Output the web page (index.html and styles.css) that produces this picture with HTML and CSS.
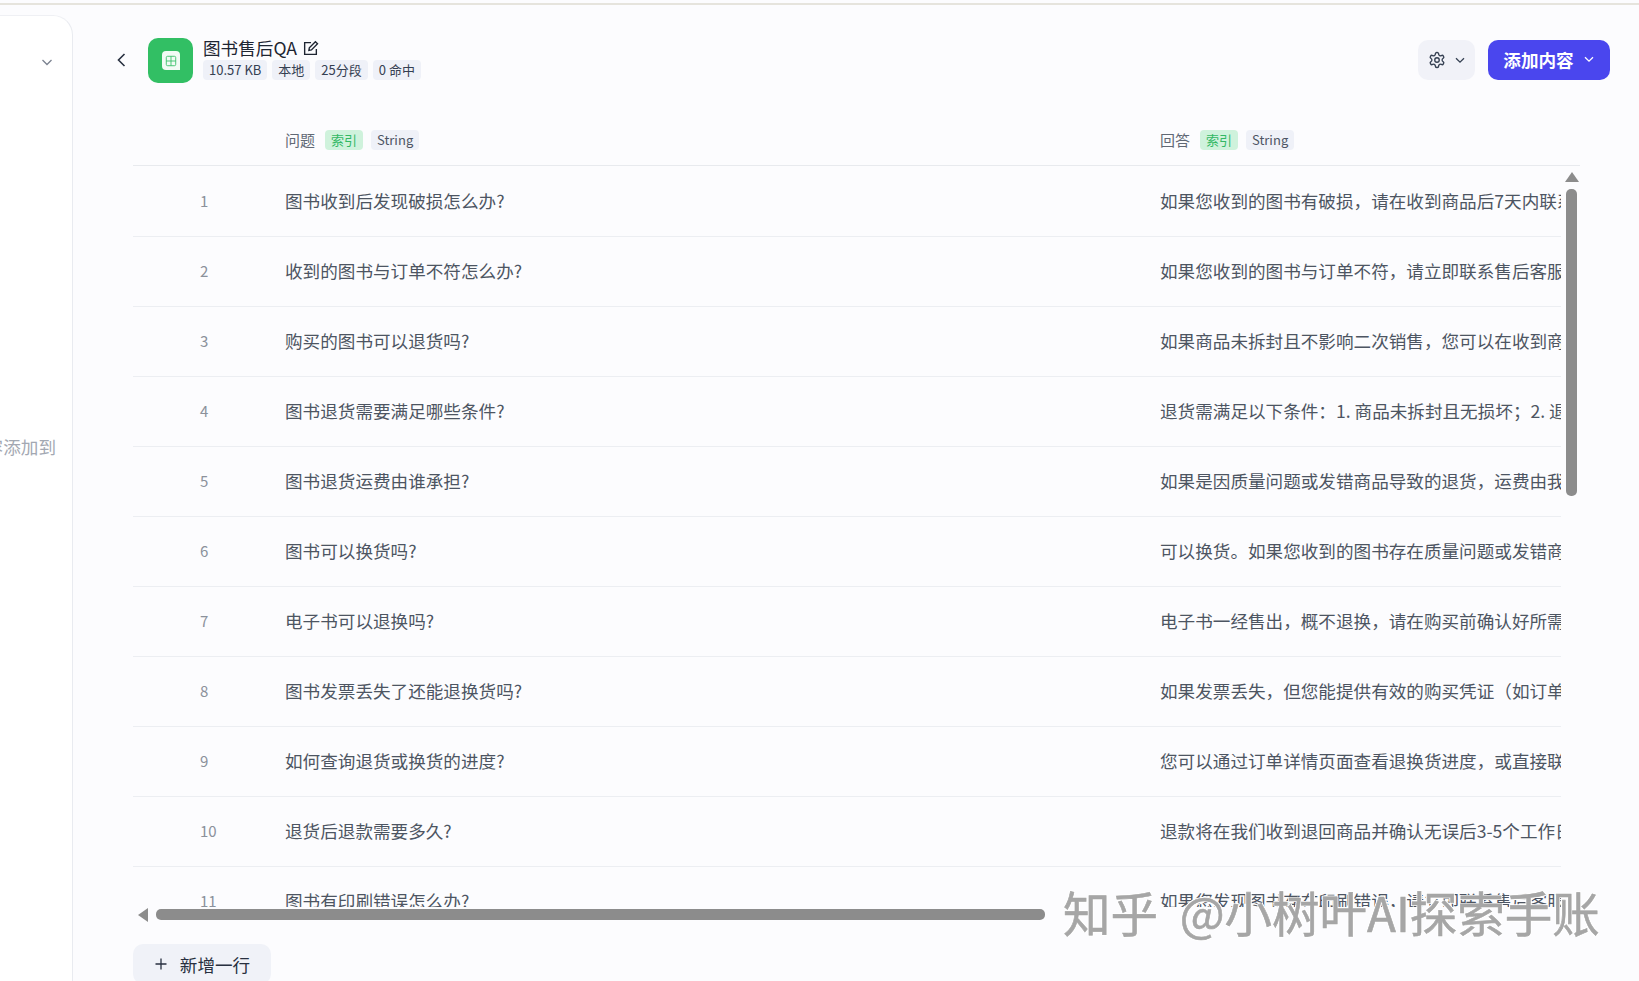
FILE: index.html
```html
<!DOCTYPE html>
<html lang="zh-CN">
<head>
  <meta charset="UTF-8" />
  <title>图书售后QA</title>
  <link rel="stylesheet" href="styles.css">
</head>
<body>

  <div class="app">
    <aside class="sidebar">
      <button class="side-toggle">
        <svg width="14" height="14" viewBox="0 0 14 14"><path d="M2.500 5l4.500 4.500L11.500 5" /></svg>
      </button>
      <p class="side-hint">将内容添加到</p>
    </aside>

    <main class="main">
      <header class="topbar">
        <div class="doc-info">
          <button class="back-btn">
            <svg width="20" height="20" viewBox="0 0 20 20"><path d="M12.500 4l-6 6 6 6" /></svg>
          </button>
          <div class="doc-icon">
            <div class="doc-sheet">
              <svg width="14" height="14" viewBox="0 0 14 14"><rect x="1.500" y="1.500" width="11" height="11" rx="1.500" /><path d="M1.500 7h11M7 1.500v11" /></svg>
            </div>
          </div>
          <div class="doc-text">
            <div class="doc-title">
              <span>图书售后QA</span>
              <svg width="17" height="17" viewBox="0 0 16 16"><path d="M13.500 8.500v5h-11v-11h6M6.500 9.700l.4-2.400L12.600 1.600l2 2-5.700 5.700z" /></svg>
            </div>
            <div class="doc-tags">
              <span class="tag">10.57 KB</span>
              <span class="tag">本地</span>
              <span class="tag">25分段</span>
              <span class="tag">0 命中</span>
            </div>
          </div>
        </div>

        <div class="actions">
          <button class="settings-btn">
            <svg class="gear" width="18" height="18" viewBox="0 0 24 24"><path d="M12.220 2h-.44a2 2 0 0 0-2 2v.18a2 2 0 0 1-1 1.730l-.43.25a2 2 0 0 1-2 0l-.15-.08a2 2 0 0 0-2.730.73l-.22.38a2 2 0 0 0 .73 2.730l.15.1a2 2 0 0 1 1 1.720v.51a2 2 0 0 1-1 1.740l-.15.09a2 2 0 0 0-.73 2.730l.22.38a2 2 0 0 0 2.730.73l.15-.08a2 2 0 0 1 2 0l.43.25a2 2 0 0 1 1 1.730V20a2 2 0 0 0 2 2h.44a2 2 0 0 0 2-2v-.18a2 2 0 0 1 1-1.730l.43-.25a2 2 0 0 1 2 0l.15.08a2 2 0 0 0 2.730-.73l.22-.39a2 2 0 0 0-.73-2.730l-.15-.08a2 2 0 0 1-1-1.740v-.5a2 2 0 0 1 1-1.740l.15-.09a2 2 0 0 0 .73-2.730l-.22-.38a2 2 0 0 0-2.730-.73l-.15.08a2 2 0 0 1-2 0l-.43-.25a2 2 0 0 1-1-1.730V4a2 2 0 0 0-2-2z" /><circle cx="12" cy="12" r="3" /></svg>
            <svg width="12" height="12" viewBox="0 0 12 12"><path d="M2 4.200l4 4 4-4" /></svg>
          </button>
          <button class="add-btn">
            <span>添加内容</span>
            <svg width="12" height="12" viewBox="0 0 12 12"><path d="M2 4.200l4 4 4-4" /></svg>
          </button>
        </div>
      </header>

      <section class="table-wrap">
        <div class="table-head">
          <div></div>
          <div class="head-cell"><span class="head-label">问题</span><span class="badge green">索引</span><span class="badge">String</span></div>
          <div class="head-cell"><span class="head-label">回答</span><span class="badge green">索引</span><span class="badge">String</span></div>
        </div>

        <div class="table-body">
          <div class="row"><div class="num">1</div><div class="cell">图书收到后发现破损怎么办?</div><div class="cell">如果您收到的图书有破损，请在收到商品后7天内联系售后客服</div></div>
          <div class="row"><div class="num">2</div><div class="cell">收到的图书与订单不符怎么办?</div><div class="cell">如果您收到的图书与订单不符，请立即联系售后客服处理</div></div>
          <div class="row"><div class="num">3</div><div class="cell">购买的图书可以退货吗?</div><div class="cell">如果商品未拆封且不影响二次销售，您可以在收到商品后退货</div></div>
          <div class="row"><div class="num">4</div><div class="cell">图书退货需要满足哪些条件?</div><div class="cell">退货需满足以下条件：1. 商品未拆封且无损坏；2. 退货申请在有效期内</div></div>
          <div class="row"><div class="num">5</div><div class="cell">图书退货运费由谁承担?</div><div class="cell">如果是因质量问题或发错商品导致的退货，运费由我们承担</div></div>
          <div class="row"><div class="num">6</div><div class="cell">图书可以换货吗?</div><div class="cell">可以换货。如果您收到的图书存在质量问题或发错商品，可申请换货</div></div>
          <div class="row"><div class="num">7</div><div class="cell">电子书可以退换吗?</div><div class="cell">电子书一经售出，概不退换，请在购买前确认好所需内容</div></div>
          <div class="row"><div class="num">8</div><div class="cell">图书发票丢失了还能退换货吗?</div><div class="cell">如果发票丢失，但您能提供有效的购买凭证（如订单截图）</div></div>
          <div class="row"><div class="num">9</div><div class="cell">如何查询退货或换货的进度?</div><div class="cell">您可以通过订单详情页面查看退换货进度，或直接联系客服</div></div>
          <div class="row"><div class="num">10</div><div class="cell">退货后退款需要多久?</div><div class="cell">退款将在我们收到退回商品并确认无误后3-5个工作日内到账</div></div>
          <div class="row"><div class="num">11</div><div class="cell">图书有印刷错误怎么办?</div><div class="cell">如果您发现图书存在印刷错误，请立即联系售后客服处理</div></div>
        </div>

        <div class="hscroll">
          <span class="arrow-left"></span>
          <span class="hthumb"></span>
        </div>

        <div class="vscroll">
          <span class="arrow-up"></span>
          <span class="vthumb"></span>
        </div>
      </section>

      <button class="add-row">
        <svg width="14" height="14" viewBox="0 0 14 14"><path d="M7 1.500v11M1.500 7h11" /></svg>
        <span>新增一行</span>
      </button>
    </main>
  </div>

  <div class="watermark">知乎 @小树叶AI探索手账</div>

</body>
</html>
```

FILE: styles.css
```css
* {
  margin: 0;
  padding: 0;
  box-sizing: border-box;
  font-family: "Noto Sans CJK SC", "Noto Sans", sans-serif;
}

html, body {
  height: 100%;
  overflow: hidden;
}

body {
  background-color: #fcfcfe;
  padding-top: 3px;
  color: #354052;
}

button {
  border: none;
  background: none;
  cursor: pointer;
}

svg {
  fill: none;
  stroke: currentColor;
  stroke-width: 1.3;
  display: block;
}

.app {
  display: flex;
  height: 100%;
  border-top: 2px solid #e6e4dd;
}

/* left panel, mostly cut off */
.sidebar {
  width: 73px;
  flex-shrink: 0;
  margin-top: 10px;
  background-color: #fff;
  border-right: 1px solid #e9ebf0;
  border-top: 1px solid #eff0f4;
  border-top-right-radius: 20px;
  overflow: hidden;
  position: relative;
}

.side-toggle {
  position: absolute;
  top: 39px;
  left: 40px;
  color: #7b8290;
}

.side-hint {
  position: absolute;
  top: 418px;
  right: 16px;
  white-space: nowrap;
  font-size: 17.600px;
  color: #a3a8b2;
}

.main {
  flex: 1;
  min-width: 0;
  padding: 33px 29px 0 60px;
  display: flex;
  flex-direction: column;
}

.topbar {
  display: flex;
  justify-content: space-between;
  align-items: center;
  height: 45px;
  flex-shrink: 0;
}

.doc-info {
  display: flex;
  align-items: center;
}

.back-btn {
  width: 20px;
  height: 20px;
  margin-left: -21px;
  margin-right: 16px;
  margin-top: -2px;
  color: #283040;
}

.back-btn svg {
  stroke-width: 1.6;
}

.doc-icon {
  width: 45px;
  height: 45px;
  border-radius: 10px;
  background-color: #32bf64;
  display: flex;
  align-items: center;
  justify-content: center;
}

.doc-sheet {
  width: 18px;
  height: 19px;
  background-color: #f2fbf5;
  border-radius: 4px 4px 0 4px;
  color: #32bf64;
  display: flex;
  align-items: center;
  justify-content: center;
}

.doc-sheet svg {
  width: 12px;
  height: 12px;
  stroke-width: 1;
}

.doc-text {
  margin-left: 10px;
  margin-top: -4px;
}

.doc-title {
  display: flex;
  align-items: center;
  gap: 5px;
  font-size: 17.600px;
  line-height: 22px;
  color: #1e2532;
}

.doc-tags {
  display: flex;
  gap: 5px;
  margin-top: 1px;
}

.tag {
  background-color: #eff1f8;
  border-radius: 4px;
  padding: 0 6px;
  font-size: 13px;
  line-height: 20px;
  color: #354052;
}

.actions {
  display: flex;
  gap: 13px;
  margin-top: -1px;
}

.settings-btn {
  width: 57px;
  height: 40px;
  background-color: #f1f2f8;
  border-radius: 10px;
  display: flex;
  align-items: center;
  justify-content: center;
  gap: 8px;
  color: #354052;
}

.gear {
  stroke-width: 1.8;
}

.add-btn {
  width: 122px;
  height: 40px;
  padding-bottom: 2px;
  background-color: #4a46ee;
  border-radius: 10px;
  display: flex;
  align-items: center;
  justify-content: center;
  gap: 9px;
  color: #fff;
  font-size: 17.600px;
  font-weight: 700;
}

.table-wrap {
  position: relative;
  flex-shrink: 0;
  margin-top: 42px;
  margin-right: 30px;
}

.table-head,
.row {
  display: grid;
  grid-template-columns: 152px 875px 1fr;
}

.table-head {
  height: 41px;
  border-bottom: 1px solid #e8eaee;
  padding-bottom: 10px;
  align-items: center;
}

.head-cell {
  display: flex;
  align-items: center;
  font-size: 15px;
  color: #616975;
}

.head-label {
  margin-bottom: 2px;
}

.badge {
  background-color: #eff1f8;
  border-radius: 4px;
  padding: 0 6px;
  margin-left: 8px;
  font-size: 13px;
  line-height: 20px;
  color: #4d5564;
}

.badge.green {
  background-color: #cff2dc;
  color: #32b864;
  margin-left: 10px;
}

.table-body {
  height: 741px;
  margin-right: 19px;
  margin-bottom: 2px;
  padding-top: 1px;
  overflow: hidden;
}

.row {
  height: 70px;
  padding-bottom: 3px;
  border-bottom: 1px solid #eceef2;
  align-items: center;
}

.num {
  padding-left: 67px;
  font-size: 15px;
  color: #8b919b;
}

.cell {
  font-size: 17.600px;
  color: #4d5562;
  white-space: nowrap;
  overflow: hidden;
}

.hscroll {
  height: 11px;
  display: flex;
  align-items: center;
}

.arrow-left {
  width: 0;
  height: 0;
  margin-left: 5px;
  border-top: 7px solid transparent;
  border-bottom: 7px solid transparent;
  border-right: 10px solid #8c8c8c;
}

.hthumb {
  width: 889px;
  height: 11px;
  margin-left: 8px;
  border-radius: 5px;
  background-color: #8c8c8c;
}

.vscroll {
  position: absolute;
  left: 1433px;
  top: 47px;
  width: 11px;
}

.arrow-up {
  display: block;
  width: 0;
  height: 0;
  margin-left: -1px;
  border-left: 7px solid transparent;
  border-right: 7px solid transparent;
  border-bottom: 10px solid #8c8c8c;
}

.vthumb {
  display: block;
  width: 11px;
  height: 307px;
  margin-top: 7px;
  border-radius: 5px;
  background-color: #8c8c8c;
}

.add-row {
  width: 138px;
  height: 40px;
  margin-top: 24px;
  flex-shrink: 0;
  background-color: #f0f2f8;
  border-radius: 10px;
  display: flex;
  align-items: center;
  justify-content: center;
  gap: 12px;
  font-size: 17.600px;
  color: #283040;
}

/* overlays the page, like the stamp on the screenshot */
.watermark {
  position: fixed;
  left: 1063px;
  top: 882px;
  font-size: 47.500px;
  word-spacing: 11px;
  line-height: 60px;
  white-space: nowrap;
  color: #a6a6a6;
  -webkit-text-stroke: 0.6px #a6a6a6;
  text-shadow: 1px 1px 0 #fff, -1px -1px 0 #fff, 1px -1px 0 #fff, -1px 1px 0 #fff;
}
```
